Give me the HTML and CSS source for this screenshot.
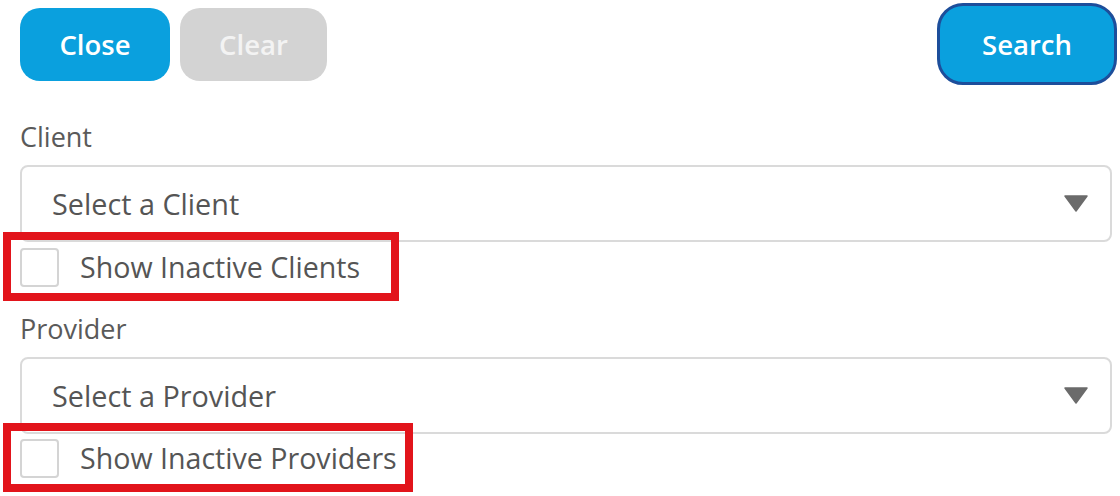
FILE: index.html
```html
<!DOCTYPE html>
<html lang="en">
<head>
<meta charset="utf-8">
<title>Search filters</title>
<link rel="stylesheet" href="styles.css">
</head>
<body>
<div class="panel">
  <div class="toolbar">
    <div class="toolbar-left">
      <button class="btn btn-primary">Close</button>
      <button class="btn btn-disabled">Clear</button>
    </div>
    <button class="btn btn-primary btn-focus">Search</button>
  </div>

  <div class="field field-first">
    <div class="label">Client</div>
    <div class="select">
      <span class="select-text">Select a Client</span>
      <svg class="caret" width="24" height="17" viewBox="0 0 24 17"><polygon points="1,1 23,1 12,16" fill="#6b6b6b" stroke="#6b6b6b" stroke-width="1.5" stroke-linejoin="round"/></svg>
    </div>
    <div class="check-row frame-clients">
      <span class="checkbox"></span>
      <span class="check-text">Show Inactive Clients</span>
    </div>
  </div>

  <div class="field field-second">
    <div class="label">Provider</div>
    <div class="select">
      <span class="select-text">Select a Provider</span>
      <svg class="caret" width="24" height="17" viewBox="0 0 24 17"><polygon points="1,1 23,1 12,16" fill="#6b6b6b" stroke="#6b6b6b" stroke-width="1.5" stroke-linejoin="round"/></svg>
    </div>
    <div class="check-row check-row-tight frame-providers">
      <span class="checkbox"></span>
      <span class="check-text">Show Inactive Providers</span>
    </div>
  </div>
</div>
</body>
</html>
```

FILE: styles.css
```css
*, *::before, *::after { box-sizing: border-box; }

html, body {
  margin: 0;
  padding: 0;
  background: #ffffff;
}

body {
  font-family: "Open Sans", "Noto Sans", sans-serif;
  color: #575757;
  width: 1120px;
  height: 496px;
  overflow: hidden;
}

.panel {
  padding: 3px 8px 0 20px;
}

.toolbar {
  display: flex;
  justify-content: space-between;
  align-items: center;
  height: 82px;
  margin-right: -5px;
}

.toolbar-left {
  display: flex;
  gap: 10px;
}

.btn {
  font-family: "Open Sans", "Noto Sans", sans-serif;
  font-weight: 600;
  font-size: 27.5px;
  color: #ffffff;
  border: none;
  height: 73px;
  border-radius: 20px;
  padding: 0;
  display: flex;
  align-items: center;
  justify-content: center;
}

.btn-primary {
  background: #0aa0de;
  width: 150px;
}

.btn-disabled {
  background: #d3d3d3;
  color: #f3f3f3;
  width: 147px;
}

.btn-focus {
  width: 180px;
  height: 82px;
  border: 3px solid #1d4e9b;
  border-radius: 26px;
}

.label {
  font-size: 27px;
  line-height: 34px;
  color: #5a5a5a;
}

.field-first {
  margin-top: 35px;
}

.field-second {
  margin-top: 25px;
}

.select {
  margin-top: 11px;
  height: 77px;
  border: 2px solid #dadada;
  border-radius: 8px;
  display: flex;
  align-items: center;
  justify-content: space-between;
  padding: 0 22px 0 30px;
}

.select-text {
  font-size: 28.8px;
  color: #555555;
}

.caret {
  display: block;
}

.check-row {
  position: relative;
  display: flex;
  align-items: center;
  gap: 21px;
  height: 39px;
  margin-top: 6px;
}

.check-row-tight {
  margin-top: 5px;
}

.check-row::after {
  content: "";
  position: absolute;
  left: -17px;
  top: -16px;
  bottom: -14px;
  border: 8px solid #e2141b;
  pointer-events: none;
}

.frame-clients::after { width: 396px; }
.frame-providers::after { width: 410px; }

.checkbox {
  width: 39px;
  height: 39px;
  border: 2px solid #d4d4d4;
  border-radius: 4px;
  background: #ffffff;
  flex: none;
}

.check-text {
  font-size: 28.6px;
  color: #555555;
  margin-top: -3px;
}
```
